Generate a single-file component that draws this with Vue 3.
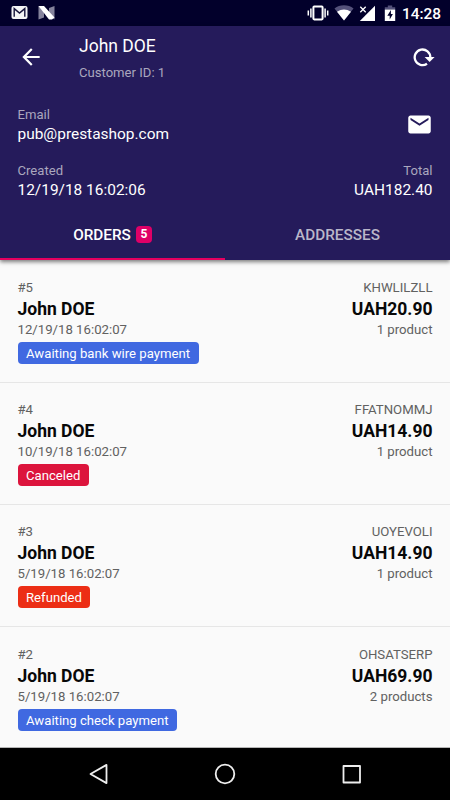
<template>
  <div class="screen">
    <div class="status-bar">
      <div class="status-bar__group">
        <svg class="status-icon" width="18" height="16" viewBox="0 0 18 16">
          <rect x="0.5" y="1" width="16" height="13" rx="2" fill="#f4f4f6" />
          <path d="M3.2 11.8V3.6L8.5 8l5.3-4.4v8.2" fill="none" stroke="#15123a" stroke-width="1.4" />
        </svg>
        <svg class="status-icon status-icon--n" width="17" height="16" viewBox="0 0 17 16">
          <path d="M.5 1v13.5l5.5-2V5zM16.5 1v13.5l-5.5-4V3z" fill="#85839c" />
          <path d="M.5 1H6l10.5 11.5L14 14.5h-3z" fill="#fff" />
        </svg>
      </div>
      <div class="status-bar__group">
        <svg class="status-icon" width="22" height="16" viewBox="0 0 22 16">
          <path d="M1.3 5.5v5M3.9 3.5v9M18.1 3.5v9M20.7 5.5v5" stroke="#fff" stroke-width="1.5" />
          <rect x="6.4" y="1.6" width="9.2" height="12.8" rx="0.8" fill="none" stroke="#fff" stroke-width="2" />
        </svg>
        <svg class="status-icon status-icon--wifi" width="20" height="16" viewBox="0 0 20 16">
          <path d="M10 15.5L.5 3.5Q4.5.3 10 .3t9.5 3.2z" fill="#54517a" />
          <path d="M10 15.5L3 6.7q7-4.5 14 0z" fill="#fff" />
        </svg>
        <svg class="status-icon status-icon--signal" width="17" height="17" viewBox="0 0 17 17">
          <path d="M16 .8V16H.8z" fill="#fff" />
          <path d="M.5 1h7v7h-7z" fill="#02002b" />
          <path d="M1.3 1.8l5.400 5.400M6.700 1.8l-5.400 5.400" stroke="#fff" stroke-width="1.3" />
        </svg>
        <svg class="status-icon status-icon--battery" width="12" height="17" viewBox="0 0 12 17">
          <path d="M.8 4.500V2.200h3V.5h4.400v1.700h3v2.300z" fill="#54517a" />
          <path d="M.8 4.500h10.400V16H.8z" fill="#fff" />
          <path d="M6.900 5L3.300 10.800h2.400v3.800L8.900 9H6.900z" fill="#02002b" />
        </svg>
        <span class="status-bar__time">14:28</span>
      </div>
    </div>

    <header class="header">
      <div class="toolbar">
        <button class="icon-button" type="button" aria-label="Back">
          <svg width="26" height="26" viewBox="0 0 24 24">
            <path d="M20 11H7.830l5.590-5.590L12 4l-8 8 8 8 1.410-1.410L7.830 13H20z" fill="#fff" />
          </svg>
        </button>
        <div class="toolbar__title">
          <h1>{{ customer.name }}</h1>
          <p>Customer ID: {{ customer.id }}</p>
        </div>
        <button class="icon-button" type="button" aria-label="Refresh">
          <svg width="22" height="20" viewBox="0 0 22 20">
            <path d="M14 16.700A7.800 7.800 0 1 1 17.300 10.500" fill="none" stroke="#fff" stroke-width="2.300" />
            <path d="M11.600 10h10l-5 5.100z" fill="#fff" />
          </svg>
        </button>
      </div>

      <div class="info info--email">
        <div>
          <p class="info__label">Email</p>
          <p class="info__value">{{ customer.email }}</p>
        </div>
        <svg class="mail-icon" width="27" height="27" viewBox="0 0 24 24">
          <path d="M20 4H4c-1.100 0-2 .900-2 2v12c0 1.100.900 2 2 2h16c1.100 0 2-.900 2-2V6c0-1.100-.900-2-2-2zm0 4l-8 5-8-5V6l8 5 8-5v2z" fill="#fff" />
        </svg>
      </div>

      <div class="info">
        <div>
          <p class="info__label">Created</p>
          <p class="info__value">{{ customer.created }}</p>
        </div>
        <div class="info__right">
          <p class="info__label">Total</p>
          <p class="info__value">{{ customer.total }}</p>
        </div>
      </div>

      <nav class="tabs">
        <button
          v-for="tab in tabs"
          :key="tab.key"
          type="button"
          class="tab"
          :class="{ 'tab--active': tab.key === selectedTab }"
          @click="selectedTab = tab.key"
        >
          {{ tab.label }}
          <span v-if="tab.count" class="tab__count">{{ tab.count }}</span>
        </button>
      </nav>
    </header>

    <main class="orders">
      <article v-for="order in orders" :key="order.id" class="order">
        <div>
          <p class="order__meta">#{{ order.id }}</p>
          <p class="order__name">{{ customer.name }}</p>
          <p class="order__meta">{{ order.date }}</p>
          <span class="status" :class="'status--' + order.type">{{ order.status }}</span>
        </div>
        <div class="order__right">
          <p class="order__meta">{{ order.reference }}</p>
          <p class="order__name">{{ order.price }}</p>
          <p class="order__meta">{{ formatProducts(order.products) }}</p>
        </div>
      </article>
    </main>

    <footer class="nav-bar">
      <svg width="22" height="22" viewBox="0 0 22 22">
        <path d="M19.500 1.900v18.200L3.500 11z" />
      </svg>
      <svg width="22" height="22" viewBox="0 0 22 22">
        <circle cx="11" cy="11" r="9.300" />
      </svg>
      <svg width="22" height="22" viewBox="0 0 22 22">
        <rect x="2.500" y="3" width="16.500" height="16.500" />
      </svg>
    </footer>
  </div>
</template>

<script setup>
import { ref } from "vue";

const customer = {
  id: 1,
  name: "John DOE",
  email: "pub@prestashop.com",
  created: "12/19/18 16:02:06",
  total: "UAH182.40"
};

const tabs = [
  { key: "orders", label: "ORDERS", count: 5 },
  { key: "addresses", label: "ADDRESSES" }
];

const selectedTab = ref("orders");

const orders = [
  { id: 5, date: "12/19/18 16:02:07", status: "Awaiting bank wire payment", type: "awaiting", reference: "KHWLILZLL", price: "UAH20.90", products: 1 },
  { id: 4, date: "10/19/18 16:02:07", status: "Canceled", type: "canceled", reference: "FFATNOMMJ", price: "UAH14.90", products: 1 },
  { id: 3, date: "5/19/18 16:02:07", status: "Refunded", type: "refunded", reference: "UOYEVOLI", price: "UAH14.90", products: 1 },
  { id: 2, date: "5/19/18 16:02:07", status: "Awaiting check payment", type: "awaiting", reference: "OHSATSERP", price: "UAH69.90", products: 2 }
];

const formatProducts = (count) => `${count} ${count === 1 ? "product" : "products"}`;
</script>

<style>
body {
  margin: 0;
  background: #000000;
}
</style>

<style scoped>
.screen {
  width: 450px;
  height: 800px;
  display: flex;
  flex-direction: column;
  overflow: hidden;
  background: #fafafa;
  font-family: Roboto, sans-serif;
}

h1,
p {
  margin: 0;
  font-weight: 400;
  white-space: nowrap;
}

button {
  border: none;
  padding: 0;
  background: none;
  font-family: inherit;
  color: inherit;
}

svg {
  display: block;
}

.status-bar {
  height: 26px;
  flex: none;
  display: flex;
  justify-content: space-between;
  align-items: center;
  box-sizing: border-box;
  padding: 0 9px 0 11px;
  background: #02002b;
  color: #ffffff;
}

.status-bar__group {
  display: flex;
  align-items: center;
}

.status-icon--n {
  margin-left: 9px;
}

.status-icon--wifi {
  margin-left: 5px;
}

.status-icon--signal {
  margin-left: 5px;
}

.status-icon--battery {
  margin-left: 8px;
}

.status-bar__time {
  margin-left: 6px;
  padding-top: 2px;
  font-size: 15.4px;
  font-weight: 500;
  line-height: 20px;
}

.header {
  position: relative;
  height: 234px;
  flex: none;
  display: flex;
  flex-direction: column;
  background: #251b5b;
  color: #ffffff;
  box-shadow: 0 2px 4px rgba(0, 0, 0, 0.5);
}

.toolbar {
  height: 61px;
  display: flex;
  align-items: center;
  padding: 0 15px 0 18px;
}

.toolbar__title {
  flex: 1;
  margin-left: 35px;
  padding-top: 4px;
}

.toolbar__title h1 {
  font-size: 17.5px;
  line-height: 24px;
}

.toolbar__title p {
  margin-top: 5px;
  font-size: 13.1px;
  line-height: 20px;
  color: #aaa7be;
}

.info {
  height: 56px;
  display: flex;
  justify-content: space-between;
  padding: 0 17.5px;
}

.info--email {
  padding-top: 17px;
}

.info__label {
  padding-top: 1px;
  font-size: 13.1px;
  line-height: 20px;
  color: #aaa7be;
}

.info__value {
  font-size: 15.45px;
  line-height: 18px;
}

.info__right {
  text-align: right;
}

.mail-icon {
  margin-top: 7px;
}

.tabs {
  flex: 1;
  display: flex;
}

.tab {
  flex: 1;
  display: flex;
  justify-content: center;
  align-items: center;
  padding-bottom: 5px;
  border-bottom: 2px solid transparent;
  font-size: 15.3px;
  font-weight: 500;
  color: #b9b6c9;
}

.tab--active {
  border-bottom-color: #e6005f;
  color: #ffffff;
}

.tab__count {
  width: 16px;
  height: 17px;
  margin-left: 5px;
  border-radius: 4px;
  background: #df0067;
  font-size: 12px;
  font-weight: 700;
  line-height: 16px;
  text-align: center;
}

.orders {
  height: 487.4px;
  flex: none;
  padding-top: 0.6px;
}

.order {
  height: 122.2px;
  box-sizing: border-box;
  display: flex;
  justify-content: space-between;
  padding: 17.4px 17.5px 0;
  border-bottom: 1px solid #e6e6e6;
}

.order:last-child {
  height: 120.8px;
  border-bottom-color: #b5b5b5;
}

.order__meta {
  font-size: 13.2px;
  line-height: 20px;
  color: #616161;
}

.order__name {
  font-size: 17.5px;
  font-weight: 700;
  line-height: 22px;
  color: #080808;
}

.order__right {
  text-align: right;
}

.status {
  display: inline-block;
  height: 22px;
  margin-top: 2px;
  padding: 0 8.5px;
  border-radius: 4px;
  font-size: 13.15px;
  line-height: 23px;
  color: #ffffff;
}

.status--awaiting {
  background: #4069e1;
}

.status--canceled {
  background: #dc143c;
}

.status--refunded {
  background: #ec2e15;
}

.nav-bar {
  flex: 1;
  display: flex;
  justify-content: center;
  align-items: center;
  gap: 105px;
  background: #000000;
}

.nav-bar svg {
  fill: none;
  stroke: #eeeeee;
  stroke-width: 1.8;
  stroke-linejoin: round;
}
</style>
